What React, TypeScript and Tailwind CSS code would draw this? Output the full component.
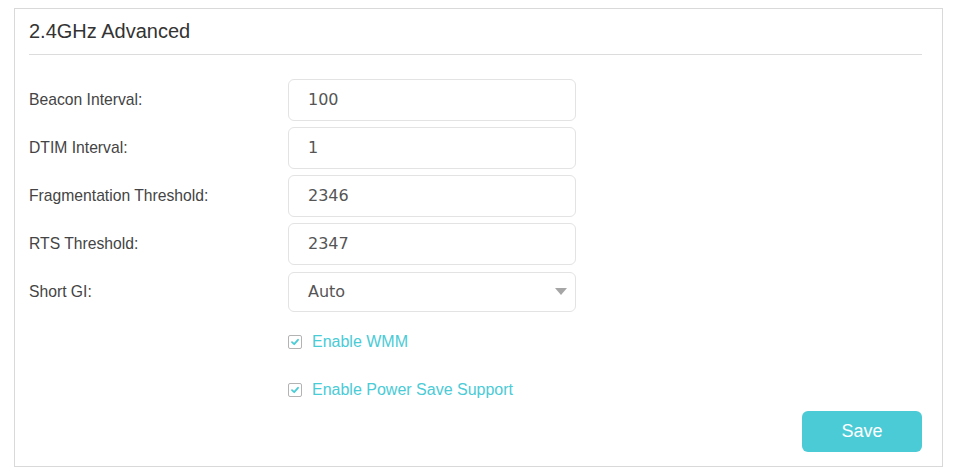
import React from "react";

const fields = [
  { label: "Beacon Interval:", value: "100" },
  { label: "DTIM Interval:", value: "1" },
  { label: "Fragmentation Threshold:", value: "2346" },
  { label: "RTS Threshold:", value: "2347" },
];

function Check({ label }: { label: string }) {
  return (
    <div className="flex h-[24px] items-center pl-[259px]">
      <span className="flex h-[14px] w-[14px] items-center justify-center rounded-[2px] border border-[#b3b3b3] bg-white">
        <svg width="10" height="10" viewBox="0 0 10 10">
          <path d="M2 5.2 L4.2 7.2 L8 2.8" fill="none" stroke="#4acbd6" strokeWidth="1.8" strokeLinecap="round" strokeLinejoin="round" />
        </svg>
      </span>
      <span className="ml-[10px] text-[16px] text-[#4acbd6] [font-family:'Liberation_Sans',Arial,sans-serif]">{label}</span>
    </div>
  );
}

export default function App() {
  return (
    <div className="h-[475px] w-[958px] bg-white pl-[14px] pt-[8px]">
      <div className="flex h-[459px] w-[929px] flex-col border border-[#d9d9d9] pl-[14px] pr-[20px] [font-family:'Liberation_Sans',Arial,sans-serif]">
        <div className="flex h-[46px] items-center border-b border-[#dcdcdc] pb-[1px] text-[20px] text-[#333]">
          2.4GHz Advanced
        </div>
        <div className="mt-[24px] flex flex-col gap-[6px]">
          {fields.map((f) => (
            <div key={f.label} className="flex items-center">
              <div className="w-[259px] text-[15.7px] text-[#444]">{f.label}</div>
              <div className="flex h-[42px] w-[288px] items-center rounded-[6px] border border-[#e3e3e3] bg-white pl-[19px] text-[16px] text-[#555] [font-family:'DejaVu_Sans',Verdana,sans-serif]">
                {f.value}
              </div>
            </div>
          ))}
          <div className="mt-[1px] flex items-center">
            <div className="w-[259px] text-[15.7px] text-[#444]">Short GI:</div>
            <div className="flex h-[40px] w-[288px] items-center justify-between rounded-[6px] border border-[#e3e3e3] bg-white pl-[19px] pr-[8px] text-[16px] text-[#555] [font-family:'DejaVu_Sans',Verdana,sans-serif]">
              <span>Auto</span>
              <svg width="12" height="8" viewBox="0 0 12 8">
                <path d="M0 0 H12 L6 7 Z" fill="#a6a6a6" />
              </svg>
            </div>
          </div>
        </div>
        <div className="mt-[18px] flex flex-col gap-[24px]">
          <Check label="Enable WMM" />
          <Check label="Enable Power Save Support" />
        </div>
        <div className="mt-[9px] flex justify-end">
          <button className="flex h-[41px] w-[120px] items-center justify-center rounded-[6px] bg-[#4acbd6] text-[18px] text-white">
            Save
          </button>
        </div>
      </div>
    </div>
  );
}
